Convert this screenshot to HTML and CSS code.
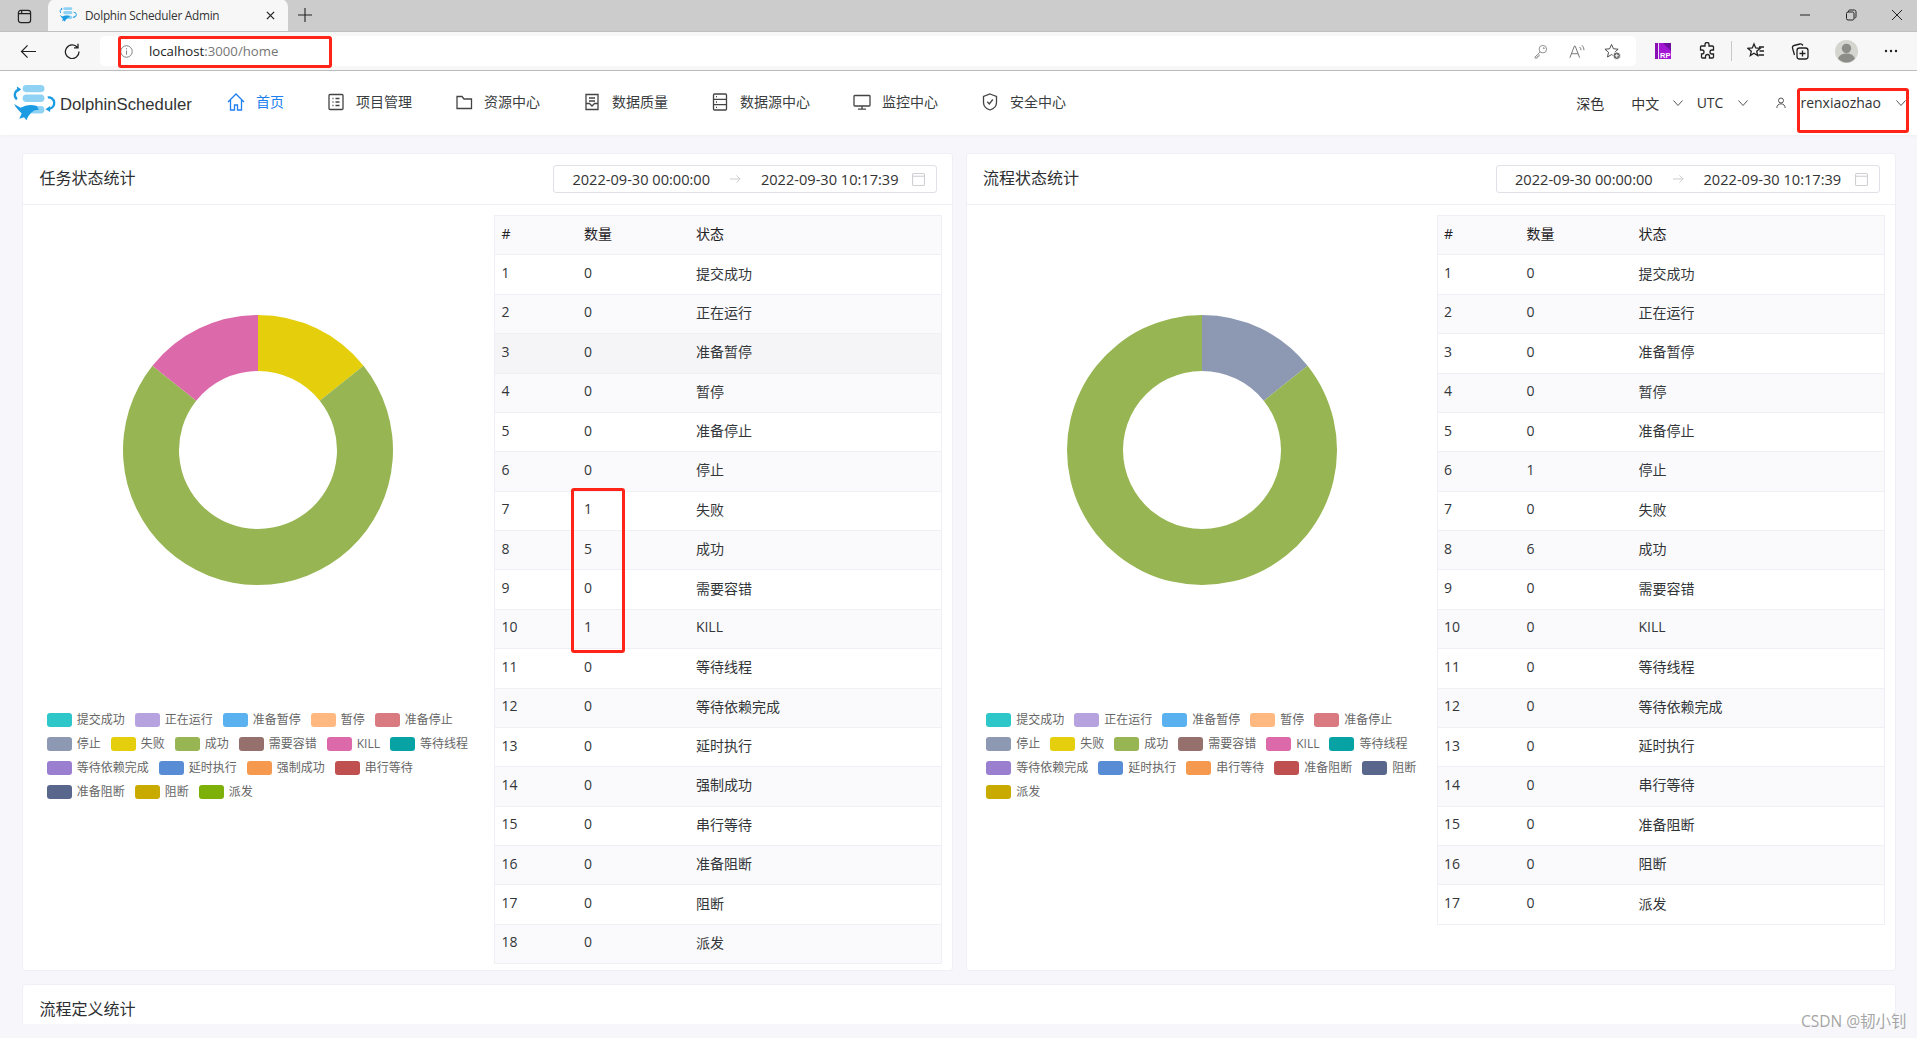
FILE: index.html
```html
<!DOCTYPE html>
<html lang="zh-CN">
<head>
<meta charset="utf-8">
<title>Dolphin Scheduler Admin</title>
<link rel="stylesheet" href="styles.css">
</head>
<body>
<svg class="defs" width="0" height="0" aria-hidden="true">
  <symbol id="logo" viewBox="0 0 46 40">
    <rect x="11" y="0" width="23" height="7.5" rx="3.75" fill="#8fd2f3"/>
    <rect x="11" y="10" width="23" height="8" rx="4" fill="#8fd2f3"/>
    <rect x="11" y="22" width="23" height="8" rx="4" fill="#8fd2f3"/>
    <path d="M7.5 4.5 A6 6 0 0 0 5 15" fill="none" stroke="#1b9be2" stroke-width="2.4"/>
    <path d="M5 1.5 L9.5 4.5 L5.5 7.5Z" fill="#1b9be2"/>
    <path d="M37.5 13 A6 6 0 0 1 39 25" fill="none" stroke="#1b9be2" stroke-width="2.4"/>
    <path d="M40 22 L35 25.5 L40 28.5Z" fill="#1b9be2"/>
    <path d="M2 20 L9 24 C14 21 20 20 26 22 L28 26 C22 26 20 29 17 33 L15 37 L12.5 34 L7.5 35.5 L10 30 C7 27 4 24 2 20Z" fill="#1b9be2"/>
  </symbol>
</svg>

<header class="chrome">
  <div class="tabstrip">
    <svg class="win-tabs" viewBox="0 0 16 16"><rect x="1.5" y="1.5" width="13" height="13" rx="2.5"/><path d="M1.5 5h13M5 1.5v3.5"/></svg>
    <div class="tab">
      <svg class="favicon"><use href="#logo"/></svg>
      <span class="tab-title">Dolphin Scheduler Admin</span>
      <svg class="tab-close" viewBox="0 0 10 10"><path d="M1 1l8 8M9 1l-8 8"/></svg>
    </div>
    <svg class="tab-new" viewBox="0 0 14 14"><path d="M7 0v14M0 7h14"/></svg>
    <div class="win-controls">
      <svg viewBox="0 0 12 12"><path d="M1 6h10"/></svg>
      <svg viewBox="0 0 12 12"><rect x="1.5" y="3" width="7.5" height="8" rx="1.5"/><path d="M3.5 3V2.2C3.5 1.5 4 1 4.7 1h4.6c1 0 1.7.7 1.7 1.7v5c0 .7-.5 1.3-1.5 1.3"/></svg>
      <svg viewBox="0 0 12 12"><path d="M1 1l10 10M11 1L1 11"/></svg>
    </div>
  </div>
  <div class="toolbar">
    <svg class="tb-icon back" viewBox="0 0 18 16"><path d="M17 8H1.5M8 1.5L1.5 8 8 14.5"/></svg>
    <svg class="tb-icon reload" viewBox="0 0 16 16"><path d="M13.5 4.5A6.8 6.8 0 1 0 15 8.5M14 .8v4h-4"/></svg>
    <div class="addressbar">
      <svg class="info" viewBox="0 0 14 14"><circle cx="7" cy="7" r="6.2"/><path d="M7 6v4.4M7 3.4v1.2"/></svg>
      <span class="url"><span class="url-host">localhost</span>:3000/home</span>
      <svg class="ab-icon key" viewBox="0 0 16 16"><circle cx="10.5" cy="5.5" r="4"/><path d="M7.5 8.5L2 14v1h2.5v-2h2v-2"/><circle cx="11.5" cy="4.5" r=".6"/></svg>
      <svg class="ab-icon read" viewBox="0 0 18 16"><path d="M1 15L6 2h1l5 13M3 10.5h7M12 3c1 1 1.5 2 1.5 3.5M14.5 1c1.6 1.6 2.3 3.5 2.3 5.5"/></svg>
      <svg class="ab-icon fav-add" viewBox="0 0 18 18"><path d="M8 1.5l2 4.6 5 .5-3.800 3.300 1.100 4.900L8 12.300 3.700 14.800l1.100-4.900L1 6.600l5-.5z"/><circle class="solid" cx="13.500" cy="13.500" r="4"/><path class="plus" d="M13.500 11.500v4M11.500 13.500h4"/></svg>
    </div>
    <div class="ext-icons">
      <svg class="rp" viewBox="0 0 16 16"><rect width="16" height="16" fill="#a316d4"/><path d="M0 0h3v16H0z" fill="#8a10b5"/><path d="M3 0h1v16H3z" fill="#eedcf8"/><path d="M8 0h8v8z" fill="#6d0f9c"/><text x="5" y="14.500" class="rp-text">RP</text></svg>
      <svg class="tb-icon puzzle" viewBox="0 0 18 18"><path d="M7 2.500a2 2 0 0 1 4 0V4h3.500a1 1 0 0 1 1 1v3H14a2 2 0 0 0 0 4h1.500v3a1 1 0 0 1-1 1h-3v-1.500a2 2 0 0 0-4 0V16h-3a1 1 0 0 1-1-1v-3H4a2 2 0 0 0 0-4H2.500V5a1 1 0 0 1 1-1H7z"/></svg>
      <span class="tb-sep"></span>
      <svg class="tb-icon favs" viewBox="0 0 18 18"><path d="M7 2l1.700 4 4.300.4-3.300 2.800 1 4.300L7 11.200l-3.700 2.300 1-4.300L1 6.400 5.300 6zM12 5h5M12.500 9H17M11.500 13H17"/></svg>
      <svg class="tb-icon coll" viewBox="0 0 18 18"><rect x="6" y="6" width="11" height="11" rx="2.500"/><path d="M11.500 8.500v6M8.500 11.500h6M12 3.500L11 2.500a2 2 0 0 0-2-.5L3 3.500a2 2 0 0 0-1.500 2.500L3.500 13"/></svg>
      <svg class="avatar" viewBox="0 0 22 22"><circle cx="11" cy="11" r="11" fill="#d5d5d0"/><circle cx="11" cy="8" r="4.500" fill="#8c8c88"/><path d="M3 18c1-3.500 4-5 8-5s7 1.500 8 5a11 11 0 0 1-16 0z" fill="#8c8c88"/></svg>
      <svg class="dots" viewBox="0 0 14 4"><circle cx="2" cy="2" r="1.200"/><circle cx="7" cy="2" r="1.200"/><circle cx="12" cy="2" r="1.200"/></svg>
    </div>
  </div>
</header>

<nav class="nav">
  <div class="brand">
    <svg class="brand-logo"><use href="#logo"/></svg>
    <span class="brand-name">DolphinScheduler</span>
  </div>
  <ul class="menu">
    <li class="menu-item active">
      <svg viewBox="0 0 18 18"><path d="M1 9l8-8 8 8M3.500 7v10h4v-5h3v5h4V7"/></svg><span>首页</span>
    </li>
    <li class="menu-item">
      <svg viewBox="0 0 18 18"><rect x="2" y="1.500" width="14" height="15" rx="1"/><path d="M5.500 5.500h1M5.500 9h1M5.500 12.500h1M8.500 5.500h4M8.500 9h4M8.500 12.500h4"/></svg><span>项目管理</span>
    </li>
    <li class="menu-item">
      <svg viewBox="0 0 18 18"><path d="M2 3.500h5l2 2.500h7.500v9.500H2z"/></svg><span>资源中心</span>
    </li>
    <li class="menu-item">
      <svg viewBox="0 0 18 18"><path d="M3 1.500h12v15H3zM6 5h6M6 8h6M3 10.500h3.500L9 13l2.500-2.500H15"/></svg><span>数据质量</span>
    </li>
    <li class="menu-item">
      <svg viewBox="0 0 18 18"><rect x="2.500" y="1" width="13" height="16" rx="1"/><path d="M2.500 6.300h13M2.500 11.700h13M5 3.700h1M5 9h1M5 14.300h1"/></svg><span>数据源中心</span>
    </li>
    <li class="menu-item">
      <svg viewBox="0 0 18 18"><rect x="1" y="2.500" width="16" height="10.500" rx=".8"/><path d="M9 13v3M5 16.200h8"/></svg><span>监控中心</span>
    </li>
    <li class="menu-item">
      <svg viewBox="0 0 18 18"><path d="M9 1l6.500 2.500v6c0 3.500-2.800 6.300-6.500 7.500-3.700-1.200-6.500-4-6.500-7.500v-6zM6.300 8.800L8.300 11l3.500-4.500"/></svg><span>安全中心</span>
    </li>
  </ul>
  <div class="nav-right">
    <span class="nav-theme">深色</span>
    <span class="nav-drop nav-lang">中文<svg class="chev chev-lang" viewBox="0 0 10 6"><path d="M.5.500L5 5.500 9.500.500"/></svg></span>
    <span class="nav-drop nav-tz">UTC<svg class="chev" viewBox="0 0 10 6"><path d="M.5.500L5 5.500 9.500.500"/></svg></span>
    <span class="nav-drop nav-user">
      <svg class="user-icon" viewBox="0 0 12 14"><circle cx="6" cy="4" r="3"/><path d="M1 13c0-3 2-5 5-5s5 2 5 5"/></svg>
      <span class="user-name">renxiaozhao</span><svg class="chev" viewBox="0 0 10 6"><path d="M.5.500L5 5.500 9.500.500"/></svg>
    </span>
  </div>
</nav>

<main class="main">
  <div class="card-row">
    <section class="card card-task">
      <div class="card-head">
        <h2 class="card-title">任务状态统计</h2>
        <div class="range">
          <span class="range-date">2022-09-30 00:00:00</span>
          <svg class="range-arrow" viewBox="0 0 12 10"><path d="M0 5h11M7 1l4 4-4 4"/></svg>
          <span class="range-date">2022-09-30 10:17:39</span>
          <svg class="range-cal" viewBox="0 0 12 12"><rect x=".5" y=".5" width="11" height="11" rx="1"/><path d="M.5 3h11"/></svg>
        </div>
      </div>
      <div class="card-body">
        <div class="chart">
          <svg class="donut" viewBox="-135 -135 270 270">
            <path fill="#E5CF0D" d="M0 -135A135 135 0 0 1 105.55 -84.17L61.76 -49.25A79 79 0 0 0 0 -79Z"/>
            <path fill="#97B552" d="M105.55 -84.17A135 135 0 1 1 -105.55 -84.17L-61.76 -49.25A79 79 0 1 0 61.76 -49.25Z"/>
            <path fill="#DC69AA" d="M-105.55 -84.17A135 135 0 0 1 0 -135L0 -79A79 79 0 0 0 -61.76 -49.25Z"/>
          </svg>
          <ul class="legend legend-task">
            <li><i class="c1"></i>提交成功</li><li><i class="c2"></i>正在运行</li><li><i class="c3"></i>准备暂停</li><li><i class="c4"></i>暂停</li><li><i class="c5"></i>准备停止</li>
            <li><i class="c6"></i>停止</li><li><i class="c7"></i>失败</li><li><i class="c8"></i>成功</li><li><i class="c9"></i>需要容错</li><li><i class="c10"></i>KILL</li><li><i class="c11"></i>等待线程</li>
            <li><i class="c12"></i>等待依赖完成</li><li><i class="c13"></i>延时执行</li><li><i class="c14"></i>强制成功</li><li><i class="c15"></i>串行等待</li>
            <li><i class="c16"></i>准备阻断</li><li><i class="c17"></i>阻断</li><li><i class="c18"></i>派发</li>
          </ul>
        </div>
        <table class="stat">
          <thead><tr><th class="col-a">#</th><th class="col-b">数量</th><th>状态</th></tr></thead>
          <tbody>
            <tr><td>1</td><td>0</td><td>提交成功</td></tr>
            <tr><td>2</td><td>0</td><td>正在运行</td></tr>
            <tr class="hover"><td>3</td><td>0</td><td>准备暂停</td></tr>
            <tr><td>4</td><td>0</td><td>暂停</td></tr>
            <tr><td>5</td><td>0</td><td>准备停止</td></tr>
            <tr><td>6</td><td>0</td><td>停止</td></tr>
            <tr><td>7</td><td>1</td><td>失败</td></tr>
            <tr><td>8</td><td>5</td><td>成功</td></tr>
            <tr><td>9</td><td>0</td><td>需要容错</td></tr>
            <tr><td>10</td><td>1</td><td>KILL</td></tr>
            <tr><td>11</td><td>0</td><td>等待线程</td></tr>
            <tr><td>12</td><td>0</td><td>等待依赖完成</td></tr>
            <tr><td>13</td><td>0</td><td>延时执行</td></tr>
            <tr><td>14</td><td>0</td><td>强制成功</td></tr>
            <tr><td>15</td><td>0</td><td>串行等待</td></tr>
            <tr><td>16</td><td>0</td><td>准备阻断</td></tr>
            <tr><td>17</td><td>0</td><td>阻断</td></tr>
            <tr><td>18</td><td>0</td><td>派发</td></tr>
          </tbody>
        </table>
      </div>
    </section>

    <section class="card">
      <div class="card-head">
        <h2 class="card-title">流程状态统计</h2>
        <div class="range">
          <span class="range-date">2022-09-30 00:00:00</span>
          <svg class="range-arrow" viewBox="0 0 12 10"><path d="M0 5h11M7 1l4 4-4 4"/></svg>
          <span class="range-date">2022-09-30 10:17:39</span>
          <svg class="range-cal" viewBox="0 0 12 12"><rect x=".5" y=".5" width="11" height="11" rx="1"/><path d="M.5 3h11"/></svg>
        </div>
      </div>
      <div class="card-body">
        <div class="chart">
          <svg class="donut" viewBox="-135 -135 270 270">
            <path fill="#8D98B3" d="M0 -135A135 135 0 0 1 105.55 -84.17L61.76 -49.25A79 79 0 0 0 0 -79Z"/>
            <path fill="#97B552" d="M105.55 -84.17A135 135 0 1 1 0 -135L0 -79A79 79 0 1 0 61.76 -49.25Z"/>
          </svg>
          <ul class="legend legend-flow">
            <li><i class="c1"></i>提交成功</li><li><i class="c2"></i>正在运行</li><li><i class="c3"></i>准备暂停</li><li><i class="c4"></i>暂停</li><li><i class="c5"></i>准备停止</li>
            <li><i class="c6"></i>停止</li><li><i class="c7"></i>失败</li><li><i class="c8"></i>成功</li><li><i class="c9"></i>需要容错</li><li><i class="c10"></i>KILL</li><li><i class="c11"></i>等待线程</li>
            <li><i class="c12"></i>等待依赖完成</li><li><i class="c13"></i>延时执行</li><li><i class="c14"></i>串行等待</li><li><i class="c15"></i>准备阻断</li><li><i class="c16"></i>阻断</li>
            <li><i class="c17"></i>派发</li>
          </ul>
        </div>
        <table class="stat">
          <thead><tr><th class="col-a">#</th><th class="col-b">数量</th><th>状态</th></tr></thead>
          <tbody>
            <tr><td>1</td><td>0</td><td>提交成功</td></tr>
            <tr><td>2</td><td>0</td><td>正在运行</td></tr>
            <tr><td>3</td><td>0</td><td>准备暂停</td></tr>
            <tr><td>4</td><td>0</td><td>暂停</td></tr>
            <tr><td>5</td><td>0</td><td>准备停止</td></tr>
            <tr><td>6</td><td>1</td><td>停止</td></tr>
            <tr><td>7</td><td>0</td><td>失败</td></tr>
            <tr><td>8</td><td>6</td><td>成功</td></tr>
            <tr><td>9</td><td>0</td><td>需要容错</td></tr>
            <tr><td>10</td><td>0</td><td>KILL</td></tr>
            <tr><td>11</td><td>0</td><td>等待线程</td></tr>
            <tr><td>12</td><td>0</td><td>等待依赖完成</td></tr>
            <tr><td>13</td><td>0</td><td>延时执行</td></tr>
            <tr><td>14</td><td>0</td><td>串行等待</td></tr>
            <tr><td>15</td><td>0</td><td>准备阻断</td></tr>
            <tr><td>16</td><td>0</td><td>阻断</td></tr>
            <tr><td>17</td><td>0</td><td>派发</td></tr>
          </tbody>
        </table>
      </div>
    </section>
  </div>
  <section class="card card-next">
    <h2 class="card-title">流程定义统计</h2>
  </section>
</main>

<div class="mark mark-url"></div>
<div class="mark mark-user"></div>
<div class="mark mark-count"></div>
<div class="watermark">CSDN @韧小钊</div>
</body>
</html>
```
FILE: styles.css
```css
* { box-sizing: border-box; }
html, body { height: 100%; }
body {
  margin: 0;
  height: 1038px;
  overflow: hidden;
  background: #f7f7fb;
  color: #333639;
  font-family: "Open Sans", "Noto Sans CJK SC", sans-serif;
  font-size: 14px;
}
.defs { position: absolute; }

/* browser chrome */
.chrome { background: #f7f7f7; border-bottom: 1px solid #bdbdbd; height: 71px; }
.tabstrip { height: 32px; background: #cccccc; display: flex; align-items: flex-end; position: relative; border-bottom: 1px solid #bfbfbf; }
.win-tabs { width: 15px; height: 15px; margin: 0 16px 7px 17px; fill: none; stroke: #222; stroke-width: 1.3; }
.tab {
  width: 240px; height: 32px; background: #f7f7f7; border-radius: 8px 8px 0 0;
  display: flex; align-items: center; padding: 0 12px 0 11px;
}
.favicon { width: 18px; height: 16px; flex: none; }
.tab-title { font-size: 11.800px; margin-left: 8px; flex: 1; color: #333; white-space: nowrap; letter-spacing: -.25px; }
.tab-close { width: 9px; height: 9px; margin-right: 1px; fill: none; stroke: #222; stroke-width: 1.4; }
.tab-new { width: 14px; height: 14px; margin: 0 0 9px 10px; fill: none; stroke: #222; stroke-width: 1.1; }
.win-controls { margin-left: auto; display: flex; gap: 34px; padding: 0 14px 10px 0; }
.win-controls svg { width: 12px; height: 12px; fill: none; stroke: #222; stroke-width: 1; }

.toolbar { height: 38px; display: flex; align-items: center; padding: 0 0 0 20px; }
.tb-icon { fill: none; stroke: #222; stroke-width: 1.3; flex: none; }
.back { width: 17px; height: 15px; }
.reload { width: 16px; height: 16px; margin-left: 27px; }
.addressbar {
  width: 1536px; height: 30px; margin-left: 20px; background: #fff; border-radius: 5px;
  display: flex; align-items: center; padding: 0 15px 0 20px;
}
.info { width: 13px; height: 13px; fill: none; stroke: #777; stroke-width: 1; }
.url { margin-left: 16px; font-size: 13.200px; color: #767676; flex: 1; }
.url-host { color: #222; }
.ab-icon { fill: none; stroke: #8a8a8a; stroke-width: 1; flex: none; }
.key { width: 15px; height: 15px; }
.read { width: 16px; height: 15px; margin-left: 21px; stroke: #666; }
.fav-add { width: 17px; height: 17px; margin-left: 19px; stroke: #444; }
.fav-add .solid { fill: #666; stroke: #fff; }
.fav-add .plus { stroke: #fff; }
.ext-icons { display: flex; align-items: center; margin-left: 19px; }
.rp { width: 16px; height: 16px; }
.rp-text { font: bold 7.500px "Liberation Sans", sans-serif; fill: #fff; }
.puzzle { width: 18px; height: 18px; margin-left: 26.500px; }
.tb-sep { width: 1px; height: 20px; background: #c8c8c8; margin-left: 15px; }
.favs { width: 18px; height: 18px; margin-left: 15px; }
.coll { width: 18px; height: 18px; margin-left: 26px; }
.avatar { width: 23px; height: 23px; margin-left: 26.500px; }
.dots { width: 14px; height: 4px; margin-left: 26px; fill: #222; }

/* nav */
.nav { height: 64px; background: #fff; display: flex; align-items: center; padding-bottom: 3px; box-shadow: 0 1px 3px rgba(0,0,0,.03); position: relative; }
.brand { display: flex; align-items: center; width: 205px; padding-left: 12px; flex: none; }
.brand-logo { width: 44px; height: 38px; flex: none; margin-top: 5px; }
.brand-name { font-family: "Liberation Sans", sans-serif; font-size: 16.700px; color: #333; margin-left: 4px; margin-top: 6px; }
.menu { list-style: none; margin: 0; padding: 0; display: flex; }
.menu-item { display: flex; align-items: center; gap: 11px; padding: 0 21px 0 22px; white-space: nowrap; color: #3a3d40; }
.menu-item span { margin-bottom: 2px; }
.menu-item svg { width: 18px; height: 18px; fill: none; stroke: #444; stroke-width: 1.3; }
.menu-item.active { color: #2080f0; }
.menu-item.active svg { stroke: #2080f0; }
.nav-right { margin-left: auto; display: flex; align-items: center; padding: 2px 11px 0 0; color: #333; }
.nav-drop { display: flex; align-items: center; }
.nav-lang { margin-left: 27px; }
.nav-tz { margin-left: 13.500px; }
.nav-user { margin-left: 28px; }
.chev { width: 10px; height: 6px; fill: none; stroke: #555; stroke-width: 1; margin-left: 15px; }
.chev-lang { margin-left: 14px; }
.user-icon { width: 10px; height: 12px; fill: none; stroke: #444; stroke-width: 1.1; margin-right: 14px; }

/* content */
.main { height: 889px; overflow: hidden; padding: 18px 21px 0 22.400px; }
.card-row { display: flex; gap: 12.500px; }
.card { flex: 1 1 0; min-width: 0; height: 818px; background: #fff; border: 1px solid #efeff5; border-radius: 3px; }
.card-task { flex: none; width: 931px; }
.card-head { height: 51px; border-bottom: 1px solid #efeff5; display: flex; align-items: center; justify-content: space-between; padding: 0 15px 0 16px; }
.card-title { margin: 0 0 4px; font-size: 16px; font-weight: 400; color: #2c2e31; }
.range {
  width: 384px; height: 28px; border: 1px solid #e0e0e6; border-radius: 3px;
  display: flex; align-items: center; padding: 0 11px 0 18px; color: #333;
}
.range-date { width: 139px; font-size: 14.600px; white-space: nowrap; margin-bottom: 1px; }
.range-arrow { width: 11px; height: 10px; margin: 0 19.500px 0 19px; fill: none; stroke: #c8c8cc; stroke-width: 1; flex: none; }
.range-cal { width: 13px; height: 13px; margin-left: auto; fill: none; stroke: #cfcfd4; stroke-width: 1; flex: none; }
.card-body { display: flex; padding: 10px 10px 0 0; }
.chart { width: 470px; flex: none; display: flex; flex-direction: column; align-items: center; }
.donut { width: 270px; height: 270px; margin-top: 100px; flex: none; }
.legend {
  list-style: none; margin: 128px 0 0; padding: 0; align-self: flex-start; width: 440px;
  display: flex; flex-wrap: wrap; gap: 10px; font-size: 12px; line-height: 14px; color: #666;
}
.legend-task { margin-left: 23.300px; }
.legend-flow { margin-left: 19.300px; }
.legend li { display: flex; align-items: center; gap: 5px; white-space: nowrap; }
.legend i { width: 25px; height: 14px; border-radius: 3px; flex: none; }
.c1 { background: #2EC7C9; } .c2 { background: #B6A2DE; } .c3 { background: #5AB1EF; }
.c4 { background: #FFB980; } .c5 { background: #D87A80; } .c6 { background: #8D98B3; }
.c7 { background: #E5CF0D; } .c8 { background: #97B552; } .c9 { background: #95706D; }
.c10 { background: #DC69AA; } .c11 { background: #07A2A4; } .c12 { background: #9A7FD1; }
.c13 { background: #588DD5; } .c14 { background: #F5994E; } .c15 { background: #C05050; }
.c16 { background: #59678C; } .c17 { background: #C9AB00; } .c18 { background: #7EB00A; }

.stat {
  width: 448px; flex: none; margin-left: auto; align-self: flex-start;
  border-collapse: collapse; table-layout: fixed; border: 1px solid #efeff5;
}
.stat tr { height: 39.380px; }
.stat th, .stat td { padding: 0 0 4px 6px; font-weight: 400; text-align: left; border-bottom: 1px solid #efeff5; }
.stat thead { background: #fafafc; }
.stat th { color: #1f2225; }
.col-a { width: 83px; }
.col-b { width: 112px; }
.stat tbody tr:nth-child(even) { background: #fafafc; }
.stat tbody tr.hover { background: #f5f5f7; }

.card-next { height: 60px; margin-top: 13px; padding: 11px 16px; flex: none; }

/* annotations laid over the screenshot */
.mark { position: absolute; border: 3px solid #ff2318; border-radius: 3px; }
.mark-url { left: 118px; top: 36px; width: 214px; height: 32px; }
.mark-user { left: 1797px; top: 88px; width: 112px; height: 45px; }
.mark-count { left: 571px; top: 488px; width: 54px; height: 165px; }
.watermark { position: absolute; left: 1801px; top: 1011px; font-size: 15.500px; line-height: 20px; color: #a5a5a5; white-space: nowrap; }
```
